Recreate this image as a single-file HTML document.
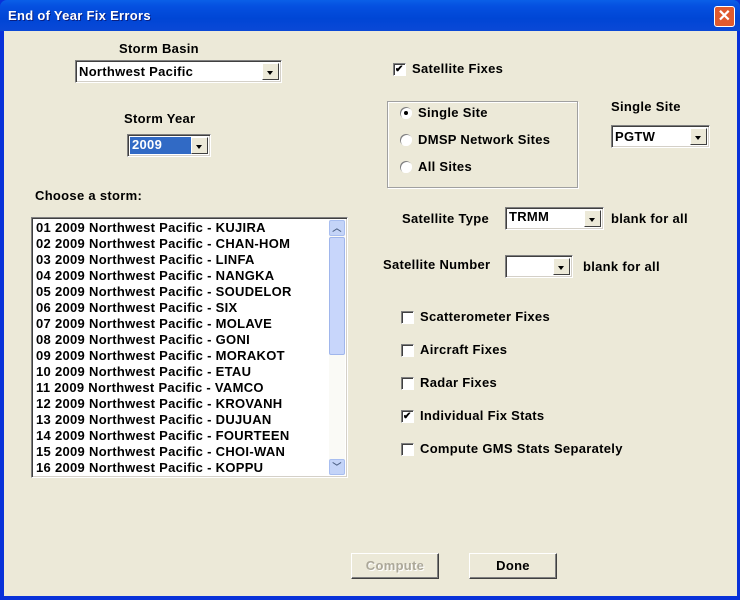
<!DOCTYPE html>
<html><head><style>
*{margin:0;padding:0;box-sizing:border-box}
body{width:740px;height:600px;overflow:hidden;background:#0831d9;font-family:"Liberation Sans",sans-serif;font-weight:bold;font-size:13px;color:#000;position:relative;letter-spacing:0.3px}
.a{position:absolute;white-space:nowrap;line-height:16px}
#title{position:absolute;left:0;top:0;width:740px;height:31px;background:linear-gradient(#0a5fe8,#0550e0 20%,#0046d5 60%,#0a48d6);border-radius:7px 7px 0 0}
#client{position:absolute;left:4px;top:31px;width:733px;height:565px;background:#ece9d8}
.combo{position:absolute;background:#fff;border:1px solid;border-color:#808080 #fff #fff #808080;box-shadow:inset 1px 1px 0 #404040,inset -1px -1px 0 #d4d0c8}
.combo .t{position:absolute;left:3px;top:3px;line-height:16px;font-size:13px}
.combo .b{position:absolute;right:2px;top:2px;width:17px;bottom:2px;background:#ece9d8;border:1px solid;border-color:#fff #404040 #404040 #fff}
.combo .b:after{content:"";position:absolute;left:4px;top:7px;border:3.5px solid transparent;border-top:4px solid #000}
.cb{position:absolute;width:13px;height:13px;background:#fff;border:1px solid;border-color:#808080 #fff #fff #808080;box-shadow:inset 1px 1px 0 #404040}
.rd{position:absolute;width:12px;height:12px;border-radius:50%;background:#fff;box-shadow:inset 1px 1px 0 #808080,inset -1px -1px 0 #fff}
.btn{position:absolute;height:26px;background:#ece9d8;border:1px solid;border-color:#fff #404040 #404040 #fff;box-shadow:inset -1px -1px 0 #808080;text-align:center;line-height:23px}
.row{height:16px;line-height:16px;padding-left:2px}
.ck{position:absolute;font-size:10px;line-height:11px;font-weight:bold}
</style></head><body>
<div id="title"></div>
<div class="a" style="left:8px;top:8px;color:#fff;font-size:13px;text-shadow:1px 1px 0 #0a1f80">End of Year Fix Errors</div>
<div style="position:absolute;left:714px;top:6px;width:21px;height:21px;border:1px solid #fff;border-radius:3px;background:#e05a2e;color:#fff;text-align:center;font-size:16px;line-height:19px">✕</div>
<div id="client"></div>

<div class="a" style="left:119px;top:41px">Storm Basin</div>
<div class="combo" style="left:75px;top:60px;width:207px;height:23px"><div class="t">Northwest Pacific</div><div class="b"></div></div>
<div class="a" style="left:124px;top:111px">Storm Year</div>
<div class="combo" style="left:127px;top:134px;width:84px;height:23px"><div class="t" style="background:#316ac5;color:#fff;left:2px;top:2px;width:61px;height:17px;padding-left:2px">2009</div><div class="b"></div></div>
<div class="a" style="left:35px;top:188px">Choose a storm:</div>

<div style="position:absolute;left:31px;top:217px;width:317px;height:261px;background:#fff;border:1px solid;border-color:#808080 #fff #fff #808080;box-shadow:inset 1px 1px 0 #404040,inset -1px -1px 0 #d4d0c8;padding:2px 0 0 2px">
<div class="row">01 2009 Northwest Pacific - KUJIRA</div>
<div class="row">02 2009 Northwest Pacific - CHAN-HOM</div>
<div class="row">03 2009 Northwest Pacific - LINFA</div>
<div class="row">04 2009 Northwest Pacific - NANGKA</div>
<div class="row">05 2009 Northwest Pacific - SOUDELOR</div>
<div class="row">06 2009 Northwest Pacific - SIX</div>
<div class="row">07 2009 Northwest Pacific - MOLAVE</div>
<div class="row">08 2009 Northwest Pacific - GONI</div>
<div class="row">09 2009 Northwest Pacific - MORAKOT</div>
<div class="row">10 2009 Northwest Pacific - ETAU</div>
<div class="row">11 2009 Northwest Pacific - VAMCO</div>
<div class="row">12 2009 Northwest Pacific - KROVANH</div>
<div class="row">13 2009 Northwest Pacific - DUJUAN</div>
<div class="row">14 2009 Northwest Pacific - FOURTEEN</div>
<div class="row">15 2009 Northwest Pacific - CHOI-WAN</div>
<div class="row">16 2009 Northwest Pacific - KOPPU</div>
<div style="position:absolute;right:2px;top:2px;width:16px;bottom:2px;background:#fafaf6">
<div style="position:absolute;left:0;top:0;width:16px;height:16px;background:#c4d4f8;border:1px solid #a8bef0;border-radius:2px;color:#4d6185;font-size:9px;text-align:center;line-height:14px">︿</div>
<div style="position:absolute;left:0;top:17px;width:16px;height:118px;background:#c8d6fb;border:1px solid #a0b6ec;border-radius:2px"></div>
<div style="position:absolute;left:0;bottom:0;width:16px;height:16px;background:#c4d4f8;border:1px solid #a8bef0;border-radius:2px;color:#4d6185;font-size:9px;text-align:center;line-height:14px">﹀</div>
</div>
</div>

<div class="cb" style="left:393px;top:63px"></div><div class="ck" style="left:395px;top:64px">✔</div>
<div class="a" style="left:412px;top:61px">Satellite Fixes</div>
<div style="position:absolute;left:387px;top:101px;width:191px;height:87px;border:1px solid #a0a0a0;box-shadow:1px 1px 0 #fff,inset 1px 1px 0 #fff"></div>
<div class="rd" style="left:400px;top:107px"></div><div style="position:absolute;left:404px;top:111px;width:4px;height:4px;background:#000;border-radius:50%"></div>
<div class="a" style="left:418px;top:105px">Single Site</div>
<div class="rd" style="left:400px;top:134px"></div><div class="a" style="left:418px;top:132px">DMSP Network Sites</div>
<div class="rd" style="left:400px;top:161px"></div><div class="a" style="left:418px;top:159px">All Sites</div>
<div class="a" style="left:611px;top:99px">Single Site</div>
<div class="combo" style="left:611px;top:125px;width:99px;height:23px"><div class="t">PGTW</div><div class="b"></div></div>

<div class="a" style="left:402px;top:211px">Satellite Type</div>
<div class="combo" style="left:505px;top:207px;width:99px;height:23px"><div class="t" style="top:1px">TRMM</div><div class="b"></div></div>
<div class="a" style="left:611px;top:211px">blank for all</div>
<div class="a" style="left:383px;top:257px">Satellite Number</div>
<div class="combo" style="left:505px;top:255px;width:68px;height:23px"><div class="b"></div></div>
<div class="a" style="left:583px;top:259px">blank for all</div>

<div class="cb" style="left:401px;top:311px"></div><div class="a" style="left:420px;top:309px">Scatterometer Fixes</div>
<div class="cb" style="left:401px;top:344px"></div><div class="a" style="left:420px;top:342px">Aircraft Fixes</div>
<div class="cb" style="left:401px;top:377px"></div><div class="a" style="left:420px;top:375px">Radar Fixes</div>
<div class="cb" style="left:401px;top:410px"></div><div class="ck" style="left:403px;top:411px">✔</div><div class="a" style="left:420px;top:408px">Individual Fix Stats</div>
<div class="cb" style="left:401px;top:443px"></div><div class="a" style="left:420px;top:441px">Compute GMS Stats Separately</div>

<div class="btn" style="left:351px;top:553px;width:88px;color:#aca899;text-shadow:1px 1px 0 #fff">Compute</div>
<div class="btn" style="left:469px;top:553px;width:88px">Done</div>
</body></html>
